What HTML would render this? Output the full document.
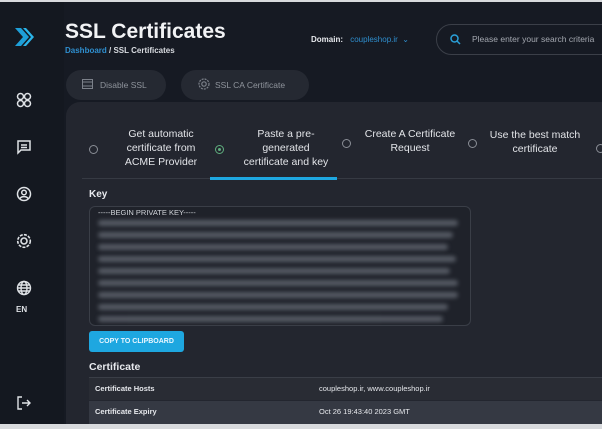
<!DOCTYPE html>
<html><head><meta charset="utf-8"><style>
*{margin:0;padding:0;box-sizing:border-box}
body{width:602px;height:429px;overflow:hidden;background:#d8dadd;font-family:"Liberation Sans",sans-serif;color:#e6e8ec;position:relative}
.app{position:absolute;left:0;top:2px;width:602px;height:422px;background:#161a23;overflow:hidden}
.side{position:absolute;left:0;top:0;width:64px;height:422px;background:#141820}
.abs{position:absolute}
h1{position:absolute;left:65px;top:18px;font-size:21px;font-weight:bold;color:#f2f3f5}
.bc{position:absolute;left:65px;top:44px;font-size:8px;font-weight:bold;color:#d8dbe0}
.bc span{color:#2f8fcf}
.pill{position:absolute;top:68px;height:30px;border-radius:15px;background:#252932;font-size:8.5px;color:#8f949c;line-height:30px}
.card{position:absolute;left:66px;top:100px;width:560px;height:340px;background:#23262f;border-radius:14px}
.tab{position:absolute;font-size:10.5px;color:#e2e4e8;text-align:center;line-height:14px}
.rad{position:absolute;width:9px;height:9px;border:1.3px solid #8a8e96;border-radius:50%}
.key{position:absolute;left:89px;top:204px;width:382px;height:120px;border:1px solid #3a3e47;border-radius:6px;background:#1f222a;overflow:hidden}
.bl{position:absolute;left:8px;height:6px;background:#5f646e;filter:blur(2px);border-radius:3px;opacity:.85}
.btn{position:absolute;left:89px;top:329px;width:95px;height:21px;background:#1ea7e0;border-radius:3px;color:#eaf7ff;font-size:7px;font-weight:bold;text-align:center;line-height:21px}
.row{position:absolute;left:89px;width:520px;height:22px;font-size:7.5px;line-height:22px}
</style></head><body>
<div class="app">
<div class="side">
 <svg class="abs" style="left:13px;top:24px" width="22" height="22" viewBox="0 0 22 22"><path d="M2 2h6l8 9-8 9H2l8-9z" fill="#1e9fd8"/><path d="M10 2h3l8 9-8 9h-3l8-9z" fill="#2bb5ea"/></svg>
 <svg class="abs" style="left:16px;top:90px" width="16" height="16" viewBox="0 0 16 16" fill="none" stroke="#dfe2e6" stroke-width="1.5"><circle cx="4.5" cy="4.5" r="3"/><circle cx="11.5" cy="4.5" r="3"/><circle cx="4.5" cy="11.5" r="3"/><circle cx="11.5" cy="11.5" r="3"/></svg>
 <svg class="abs" style="left:16px;top:137px" width="16" height="16" viewBox="0 0 16 16" fill="none" stroke="#dfe2e6" stroke-width="1.5"><path d="M2 2h12v9H5l-3 3z"/><path d="M5 6h6M5 8.5h6"/></svg>
 <svg class="abs" style="left:16px;top:184px" width="16" height="16" viewBox="0 0 16 16" fill="none" stroke="#dfe2e6" stroke-width="1.5"><circle cx="8" cy="8" r="6.5"/><circle cx="8" cy="6.5" r="2.3"/><path d="M4 12.5c1.5-2.5 6.5-2.5 8 0"/></svg>
 <svg class="abs" style="left:16px;top:231px" width="16" height="16" viewBox="0 0 16 16" fill="none" stroke="#dfe2e6" stroke-width="1.6"><circle cx="8" cy="8" r="6.3" stroke-dasharray="3 1.2"/><circle cx="8" cy="8" r="3"/></svg>
 <svg class="abs" style="left:16px;top:278px" width="16" height="16" viewBox="0 0 16 16" fill="none" stroke="#dfe2e6" stroke-width="1.4"><circle cx="8" cy="8" r="6.5"/><ellipse cx="8" cy="8" rx="3" ry="6.5"/><path d="M1.5 8h13M2.5 5h11M2.5 11h11"/></svg>
 <div class="abs" style="left:16px;top:303px;font-size:8px;font-weight:bold;color:#dfe2e6">EN</div>
 <svg class="abs" style="left:16px;top:394px" width="16" height="14" viewBox="0 0 16 14" fill="none" stroke="#dfe2e6" stroke-width="1.4"><path d="M6 1H2v12h4M6 7h8M11 4l3 3-3 3"/></svg>
</div>
<h1>SSL Certificates</h1>
<div class="bc"><span>Dashboard</span> / SSL Certificates</div>
<div class="abs" style="left:311px;top:33px;font-size:8px;font-weight:bold;color:#e8eaee">Domain: <span style="color:#2f8fcf;font-weight:normal;margin-left:5px">coupleshop.ir &nbsp;⌄</span></div>
<div class="abs" style="left:436px;top:22px;width:190px;height:31px;border:1px solid #3b3f48;border-radius:16px;font-size:8.5px;color:#a4a8b0;line-height:29px;padding-left:35px">Please enter your search criteria</div>
<svg class="abs" style="left:450px;top:32px" width="11" height="11" viewBox="0 0 11 11" fill="none" stroke="#2aa0d8" stroke-width="1.5"><circle cx="4.5" cy="4.5" r="3.5"/><path d="M7 7l3 3"/></svg>
<div class="pill" style="left:66px;width:100px;padding-left:34px">Disable SSL</div>
<svg class="abs" style="left:82px;top:77px" width="11" height="10" viewBox="0 0 11 10" fill="none" stroke="#7c818a"><rect x="0.5" y="0.5" width="10" height="9"/><path d="M0.5 3h10M0.5 7h10"/></svg>
<div class="pill" style="left:181px;width:128px;padding-left:34px">SSL CA Certificate</div>
<svg class="abs" style="left:198px;top:76px" width="12" height="12" viewBox="0 0 12 12" fill="none" stroke="#7c818a" stroke-width="1.2"><circle cx="6" cy="6" r="5" stroke-dasharray="2 1"/><circle cx="6" cy="6" r="2.2"/></svg>
<div class="card">
 <div class="rad" style="left:23px;top:43px"></div>
 <div class="tab" style="left:40px;top:25px;width:110px">Get automatic<br>certificate from<br>ACME Provider</div>
 <div class="rad" style="left:149px;top:43px;border-color:#5fae7e"><div style="position:absolute;left:1.5px;top:1.5px;width:3.5px;height:3.5px;border-radius:50%;background:#5fae7e"></div></div>
 <div class="tab" style="left:165px;top:25px;width:110px">Paste a pre-<br>generated<br>certificate and key</div>
 <div class="rad" style="left:276px;top:37px"></div>
 <div class="tab" style="left:288px;top:25px;width:112px">Create A Certificate<br>Request</div>
 <div class="rad" style="left:402px;top:37px"></div>
 <div class="tab" style="left:413px;top:26px;width:112px">Use the best match<br>certificate</div>
 <div class="rad" style="left:530px;top:42px"></div>
 <div class="abs" style="left:16px;top:76px;width:530px;height:1px;background:#363a43"></div>
 <div class="abs" style="left:144px;top:75px;width:127px;height:3px;background:#1ea7e0"></div>
 <div class="abs" style="left:23px;top:87px;font-size:10px;font-weight:bold;color:#e8eaee">Key</div>
</div>
<div class="key">
 <div class="abs" style="left:8px;top:1px;font-size:7.5px;color:#d0d3d8">-----BEGIN PRIVATE KEY-----</div>
 <div class="bl" style="top:13px;width:360px"></div>
 <div class="bl" style="top:25px;width:355px"></div>
 <div class="bl" style="top:37px;width:350px"></div>
 <div class="bl" style="top:49px;width:358px"></div>
 <div class="bl" style="top:61px;width:352px"></div>
 <div class="bl" style="top:73px;width:360px"></div>
 <div class="bl" style="top:85px;width:360px"></div>
 <div class="bl" style="top:97px;width:350px"></div>
 <div class="bl" style="top:109px;width:345px"></div>
</div>
<div class="btn">COPY TO CLIPBOARD</div>
<div class="abs" style="left:89px;top:359px;font-size:10.5px;font-weight:bold;color:#e8eaee">Certificate</div>
<div class="abs" style="left:89px;top:375px;width:520px;height:1px;background:#3a3e47"></div>
<div class="row" style="top:376px;background:#292c34"><b style="margin-left:6px">Certificate Hosts</b><span style="position:absolute;left:230px">coupleshop.ir, www.coupleshop.ir</span></div>
<div class="row" style="top:399px;background:#353943;height:23px"><b style="margin-left:6px">Certificate Expiry</b><span style="position:absolute;left:230px">Oct 26 19:43:40 2023 GMT</span></div>
</div>
</body></html>
